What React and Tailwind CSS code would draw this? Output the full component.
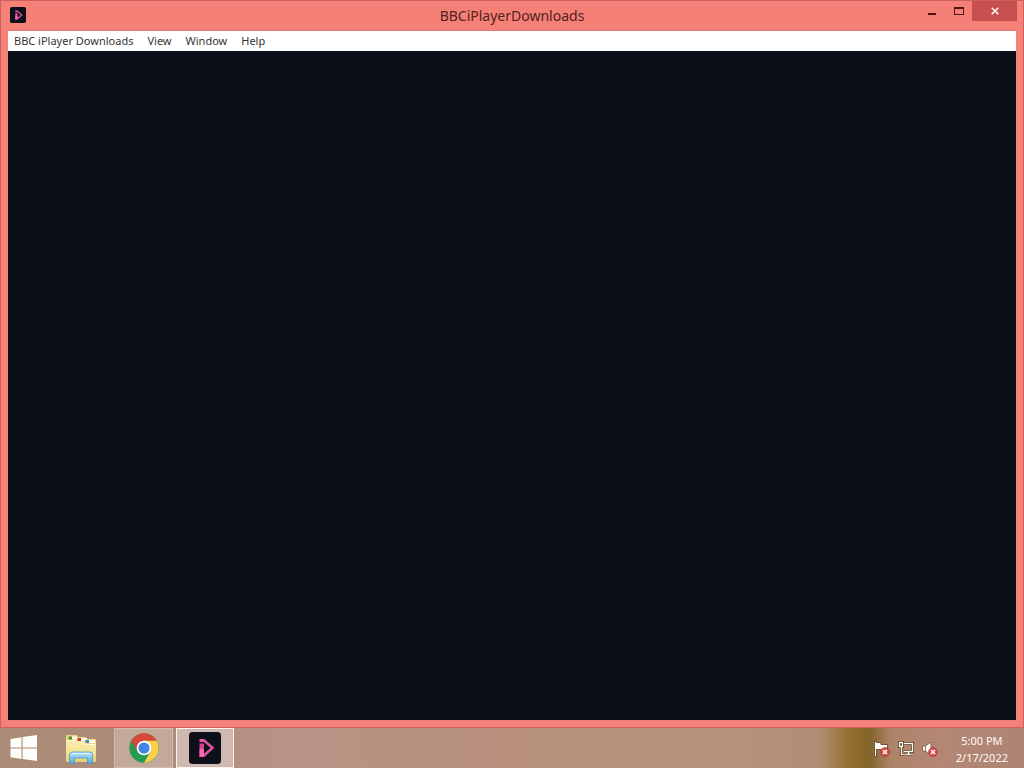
import React from "react";

const menus = ["BBC iPlayer Downloads", "View", "Window", "Help"];

function PlayerLogo({ className }) {
  return (
    <svg viewBox="0 0 32 32" className={className} aria-hidden="true">
      <rect width="32" height="32" rx="3.5" fill="#0b101b" />
      <path d="M10.500 7H15v3h-4.500z" fill="#e85aa6" />
      <path d="M10.500 11.500H15V25h-4.500z" fill="#d63f90" />
      <path d="M14.500 8 23.500 15.800 14.500 24" fill="none" stroke="#d9509e" strokeWidth="2.600" />
      <path d="M10.500 17H15v7l-1 1h-3.500z" fill="#fb66ae" />
    </svg>
  );
}

function WindowsLogo() {
  return (
    <svg viewBox="0 0 28 26" className="h-[26px] w-7" aria-hidden="true">
      <path
        d="M.5 4 11.5 2.300V12.500H.5zM12.600 2.100 27 0V12.500H12.600zM.5 13.600H11.500V24L.5 22.300zM12.600 13.600H27V26L12.600 24.100z"
        fill="#fffdfa"
      />
    </svg>
  );
}

function FolderIcon() {
  return (
    <svg viewBox="0 0 32 30" className="h-[30px] w-8" aria-hidden="true">
      <defs>
        <linearGradient id="folder" x1="0" y1="0" x2="0" y2="1">
          <stop offset="0" stopColor="#f8edb0" />
          <stop offset=".6" stopColor="#f2e390" />
          <stop offset="1" stopColor="#e3cf70" />
        </linearGradient>
        <linearGradient id="stand" x1="0" y1="0" x2="0" y2="1">
          <stop offset="0" stopColor="#b9e5f7" />
          <stop offset="1" stopColor="#4fa6dc" />
        </linearGradient>
      </defs>
      <path d="M1 1q0-1 1-1h10l1 2h8l1 2h8q1 0 1 1v8H1z" fill="#ecd985" />
      <path d="M7 1.500h5v3H7zM16 3h6v3h-6zM24 5h6v3h-6z" fill="#fff8e7" />
      <path d="M3.500 1.500H7v3H3.500z" fill="#4e8f38" />
      <path d="M12.500 3H16v3h-3.500z" fill="#c8402d" />
      <path d="M20.500 5H24v3h-3.500z" fill="#3c86cb" />
      <path d="M1 5h10l2 2h6l2 2h10v17q0 1-1 1H2q-1 0-1-1z" fill="url(#folder)" />
      <path d="M1.500 5.500h9l2 2h6l2 2h10" fill="none" stroke="#fff7cc" />
      <path d="M4.500 28V20q0-3 3-3h17q3 0 3 3v8l-5 1v-6h-13v6z" fill="url(#stand)" stroke="#3f9bd1" strokeWidth=".8" />
      <path d="M6.500 20q0-1.500 2-1.500h15q2 0 2 1.500" fill="none" stroke="#e8faff" />
    </svg>
  );
}

function ChromeIcon() {
  return (
    <svg viewBox="0 0 48 48" className="size-[30px]" aria-hidden="true">
      <circle cx="24" cy="24" r="23.500" fill="#279b51" />
      <path d="M3.650 12.250A23.500 23.500 0 0 1 44.350 12.250H24L13.800 29.900z" fill="#d94739" />
      <path d="M44.350 12.250A23.500 23.500 0 0 1 24 47.500L34.200 29.900 24 12.250z" fill="#fcd049" />
      <circle cx="24" cy="24" r="11.700" fill="#fff" />
      <circle cx="24" cy="24" r="9" fill="#4285e8" />
    </svg>
  );
}

function ErrorBadge() {
  return (
    <g>
      <circle cx="11" cy="11" r="4.500" fill="#d84a48" stroke="#a33a34" strokeWidth=".6" />
      <path d="m9 9 4 4m0-4-4 4" stroke="#fff" strokeWidth="1.500" />
    </g>
  );
}

function FlagIcon() {
  return (
    <svg viewBox="0 0 16 16" className="size-4" aria-hidden="true">
      <path d="M.5.5h2v1H7v2h6.500v6H7v-1H2.500v7h-2z" fill="#fffaf2" stroke="#563d2d" strokeWidth=".8" />
      <ErrorBadge />
    </svg>
  );
}

function NetworkIcon() {
  return (
    <svg viewBox="0 0 16 16" className="size-4" aria-hidden="true">
      <g fill="none">
        <path
          d="M6 2.500h8.500v8H6M10.500 10.500v3M7.500 13.500h6M1.500 1.500h3v4h-3zM3.500 5.500v8h2"
          stroke="#4d3627"
          strokeWidth="3"
        />
        <path
          d="M6 2.500h8.500v8H6M10.500 10.500v3M7.500 13.500h6M1.500 1.500h3v4h-3zM3.500 5.500v8h2"
          stroke="#fff6ea"
          strokeWidth="1.400"
        />
      </g>
    </svg>
  );
}

function VolumeIcon() {
  return (
    <svg viewBox="0 0 16 16" className="size-4" aria-hidden="true">
      <path d="M.5 5h3l5.500-4v13.500l-5.500-4.500h-3z" fill="#fffaf2" stroke="#604636" strokeWidth=".7" />
      <path d="M3.500 5v5" stroke="#8c7263" />
      <ErrorBadge />
    </svg>
  );
}

function TitleBar() {
  return (
    <header className="grid h-[29px] shrink-0 grid-cols-[1fr_auto_1fr] items-start">
      <div className="pt-1.5 pl-0.5">
        <PlayerLogo className="size-4" />
      </div>
      <h1 className="pt-[5px] text-[14px] leading-5 text-[#54201c]">BBCiPlayerDownloads</h1>
      <div className="-mr-px flex justify-end">
        <button aria-label="Minimize" className="flex h-5 w-[27px] items-center justify-center">
          <svg viewBox="0 0 10 10" className="size-2.5" aria-hidden="true">
            <path d="M1 7h8v2H1z" fill="#50140f" />
          </svg>
        </button>
        <button aria-label="Maximize" className="flex h-5 w-[27px] items-center justify-center">
          <svg viewBox="0 0 10 8" className="h-2 w-2.5" aria-hidden="true">
            <path d="M0 0h10v8H0zM1 2v5h8V2z" fill="#50140f" fillRule="evenodd" />
          </svg>
        </button>
        <button aria-label="Close" className="flex h-5 w-[45px] items-center justify-center bg-[#c74f50]">
          <svg viewBox="0 0 8 8" className="size-2" aria-hidden="true">
            <path d="m.7.7 6.600 6.600m0-6.600L.7 7.300" stroke="#fff8f4" strokeWidth="1.600" />
          </svg>
        </button>
      </div>
    </header>
  );
}

export default function App() {
  return (
    <div className="flex min-h-screen flex-col overflow-hidden font-['Noto_Sans',sans-serif]">
      <main className="flex flex-1 flex-col border border-[#cc625d] bg-[#f48078] px-[7px] pb-[7px]">
        <TitleBar />
        <nav className="flex h-[21px] shrink-0 items-center gap-3.5 border-t border-[#d97972] bg-white px-1.5 text-[11px] leading-4 text-[#353535]">
          {menus.map((name) => (
            <button key={name} className="whitespace-nowrap">
              {name}
            </button>
          ))}
        </nav>
        <section aria-label="Downloads" className="flex-1 bg-[#0b0f19]" />
      </main>
      <footer className="flex h-10 shrink-0 items-center justify-between bg-[linear-gradient(90deg,#a98b77_0%,#ad8c79_16%,#b99286_28%,#b8907d_48%,#b5927a_72%,#b18d75_80%,#92702e_83%,#84652b_85%,#ae8468_87%,#b48775_92%,#ad8472_100%)]">
        <div className="flex h-full items-center">
          <button aria-label="Start" className="flex h-full w-12 items-center justify-center">
            <WindowsLogo />
          </button>
          <button aria-label="File Explorer" className="flex h-full w-[66px] items-center justify-center pt-1">
            <FolderIcon />
          </button>
          <button aria-label="Google Chrome" className="flex h-full w-[59px] items-center justify-center border border-[#d0b9ad] bg-[#c2a999]">
            <ChromeIcon />
          </button>
          <button aria-label="BBC iPlayer Downloads" className="ml-[3px] flex h-full w-[58px] items-center justify-center border border-[#fff2e9] bg-[#cfb9b0]">
            <PlayerLogo className="size-8" />
          </button>
        </div>
        <div className="flex items-center pt-0.5 pr-4">
          <div className="flex items-center gap-2">
            <button aria-label="Action Center"><FlagIcon /></button>
            <button aria-label="Network"><NetworkIcon /></button>
            <button aria-label="Volume muted"><VolumeIcon /></button>
          </div>
          <button className="ml-[18px] text-center text-[11px] leading-[17px] text-[#fffaf4]">
            <span className="block">5:00 PM</span>
            <span className="block">2/17/2022</span>
          </button>
        </div>
      </footer>
    </div>
  );
}
